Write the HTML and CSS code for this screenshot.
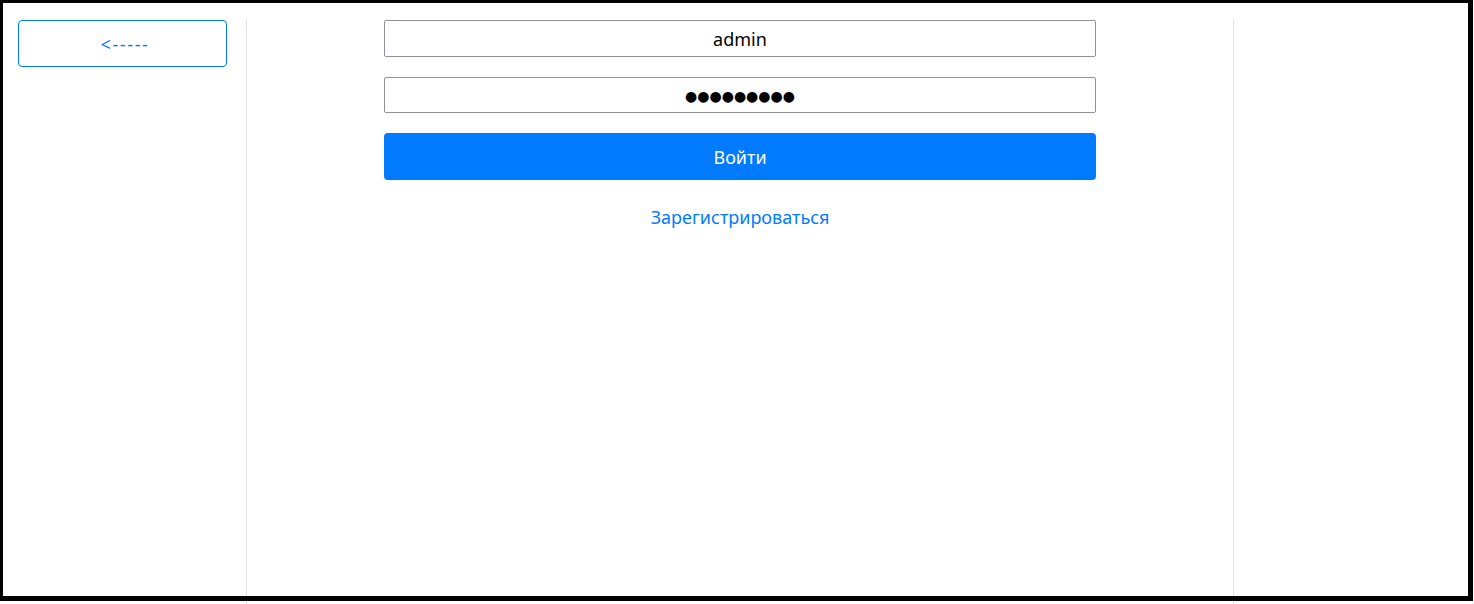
FILE: index.html
```html
<!DOCTYPE html>
<html lang="ru">
<head>
<meta charset="utf-8">
<title>Вход</title>
<link rel="stylesheet" href="styles.css">
</head>
<body>
<div class="page">
  <aside class="side-left">
    <button class="back-btn" type="button">&lt;-----</button>
  </aside>
  <main class="center">
    <form class="login-form">
      <input class="field" type="text" value="admin">
      <input class="field field-pass" type="text" value="●●●●●●●●●">
      <button class="submit-btn" type="button">Войти</button>
      <a class="register-link" href="#">Зарегистрироваться</a>
    </form>
  </main>
  <aside class="side-right"></aside>
</div>
<div class="frame"></div>
</body>
</html>
```

FILE: styles.css
```css
* { box-sizing: border-box; }
html, body { margin: 0; padding: 0; height: 100%; overflow: hidden; background: #fff; }
body {
  font-family: "Noto Sans", "Open Sans", "DejaVu Sans", sans-serif;
  color: #000;
}
.page {
  display: flex;
  padding-top: 20px;
  height: 100vh;
}
.side-left {
  width: 246px;
  flex: none;
  padding: 0 19px 0 18px;
}
.back-btn {
  display: block;
  width: 100%;
  height: 47px;
  background: #fff;
  border: 1px solid #007bff;
  border-radius: 4px;
  color: #007bff;
  font-family: inherit;
  font-size: 18px;
  letter-spacing: 1.6px;
  padding: 0 0 0 5px;
  cursor: pointer;
}
.center {
  width: 988px;
  flex: none;
  border-left: 1px solid #dee2e6;
  border-right: 1px solid #dee2e6;
  display: flex;
  justify-content: center;
}
.side-right { flex: 1; }
.login-form {
  width: 712px;
  display: flex;
  flex-direction: column;
  gap: 20px;
}
.field {
  height: 37px;
  border: 1px solid #8f8f9d;
  border-radius: 2px;
  font-family: inherit;
  font-size: 18px;
  text-align: center;
  color: #000;
  padding: 0 4px;
  background: #fff;
}
.field-pass {
  height: 36px;
  font-size: 14px;
  letter-spacing: 0;
}
.submit-btn {
  height: 47px;
  background: #007bff;
  border: none;
  border-radius: 4px;
  color: #fff;
  font-family: inherit;
  font-size: 18px;
  cursor: pointer;
}
.register-link {
  display: block;
  margin-top: 4px;
  text-align: center;
  color: #007bff;
  text-decoration: none;
  font-size: 18px;
  line-height: 27px;
}
.frame {
  position: fixed;
  left: 0;
  top: 0;
  width: 1473px;
  height: 601px;
  border-style: solid;
  border-color: #000;
  border-width: 3px 5px 5px 3px;
  pointer-events: none;
}
```
